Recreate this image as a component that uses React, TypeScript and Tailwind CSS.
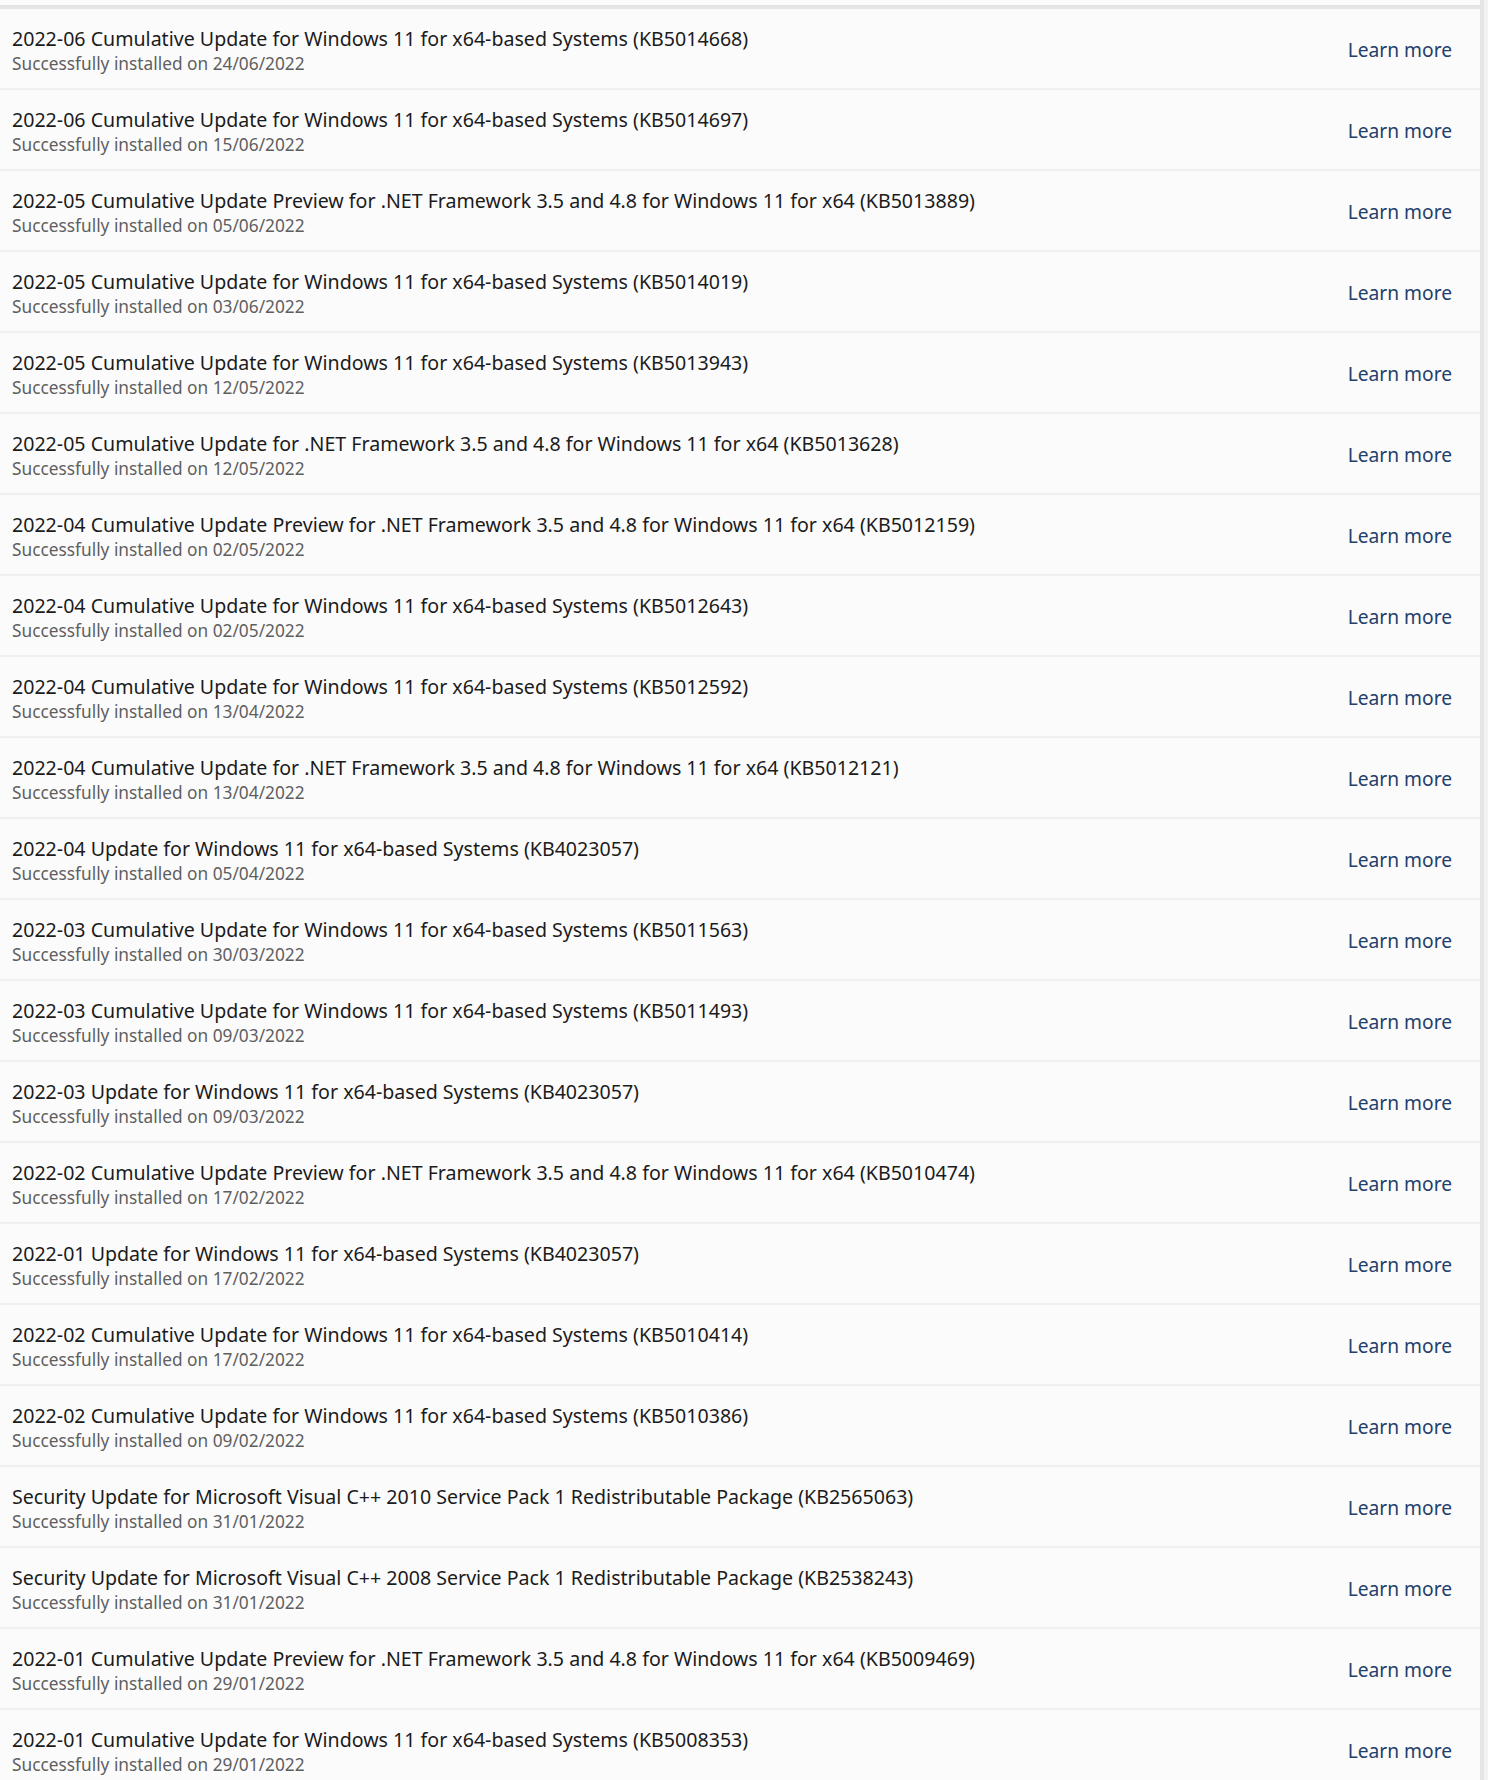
import React from 'react';

interface UpdateItem {
    title: string;
    date: string;
}

const updates: UpdateItem[] = [
    { title: '2022-06 Cumulative Update for Windows 11 for x64-based Systems (KB5014668)', date: '24/06/2022' },
    { title: '2022-06 Cumulative Update for Windows 11 for x64-based Systems (KB5014697)', date: '15/06/2022' },
    { title: '2022-05 Cumulative Update Preview for .NET Framework 3.5 and 4.8 for Windows 11 for x64 (KB5013889)', date: '05/06/2022' },
    { title: '2022-05 Cumulative Update for Windows 11 for x64-based Systems (KB5014019)', date: '03/06/2022' },
    { title: '2022-05 Cumulative Update for Windows 11 for x64-based Systems (KB5013943)', date: '12/05/2022' },
    { title: '2022-05 Cumulative Update for .NET Framework 3.5 and 4.8 for Windows 11 for x64 (KB5013628)', date: '12/05/2022' },
    { title: '2022-04 Cumulative Update Preview for .NET Framework 3.5 and 4.8 for Windows 11 for x64 (KB5012159)', date: '02/05/2022' },
    { title: '2022-04 Cumulative Update for Windows 11 for x64-based Systems (KB5012643)', date: '02/05/2022' },
    { title: '2022-04 Cumulative Update for Windows 11 for x64-based Systems (KB5012592)', date: '13/04/2022' },
    { title: '2022-04 Cumulative Update for .NET Framework 3.5 and 4.8 for Windows 11 for x64 (KB5012121)', date: '13/04/2022' },
    { title: '2022-04 Update for Windows 11 for x64-based Systems (KB4023057)', date: '05/04/2022' },
    { title: '2022-03 Cumulative Update for Windows 11 for x64-based Systems (KB5011563)', date: '30/03/2022' },
    { title: '2022-03 Cumulative Update for Windows 11 for x64-based Systems (KB5011493)', date: '09/03/2022' },
    { title: '2022-03 Update for Windows 11 for x64-based Systems (KB4023057)', date: '09/03/2022' },
    { title: '2022-02 Cumulative Update Preview for .NET Framework 3.5 and 4.8 for Windows 11 for x64 (KB5010474)', date: '17/02/2022' },
    { title: '2022-01 Update for Windows 11 for x64-based Systems (KB4023057)', date: '17/02/2022' },
    { title: '2022-02 Cumulative Update for Windows 11 for x64-based Systems (KB5010414)', date: '17/02/2022' },
    { title: '2022-02 Cumulative Update for Windows 11 for x64-based Systems (KB5010386)', date: '09/02/2022' },
    { title: 'Security Update for Microsoft Visual C++ 2010 Service Pack 1 Redistributable Package (KB2565063)', date: '31/01/2022' },
    { title: 'Security Update for Microsoft Visual C++ 2008 Service Pack 1 Redistributable Package (KB2538243)', date: '31/01/2022' },
    { title: '2022-01 Cumulative Update Preview for .NET Framework 3.5 and 4.8 for Windows 11 for x64 (KB5009469)', date: '29/01/2022' },
    { title: '2022-01 Cumulative Update for Windows 11 for x64-based Systems (KB5008353)', date: '29/01/2022' },
];

const UpdateRow: React.FC<{ item: UpdateItem }> = ({ item }) => (
    <div className="flex items-center h-[81px] shrink-0 border-b-2 border-[#f0f0f0] bg-[#fbfbfb] pl-[12px] pr-[28px] pt-[3px]">
        <div className="flex-1 min-w-0">
            <p className="text-[19.6px] leading-[27px] text-[#1b1b1b] truncate">{item.title}</p>
            <p className="text-[17.3px] leading-[23px] text-[#5f5f5f]">Successfully installed on {item.date}</p>
        </div>
        <a className="text-[19.2px] text-[#23406c] cursor-pointer">Learn more</a>
    </div>
);

export default function App() {
    return (
        <div className="flex h-[1780px] w-full overflow-hidden bg-[#f3f3f3] font-['Noto_Sans',sans-serif]">
            <div className="flex flex-col w-[1480px] shrink-0">
                <div className="h-[5px] shrink-0 bg-[#fcfcfc] mr-[-2px]" />
                <div className="h-[4px] shrink-0 bg-[#e5e5e5] mr-[-4px]" />
                {updates.map((u) => (
                    <UpdateRow key={u.title + u.date} item={u} />
                ))}
            </div>
            <div className="w-[4px] shrink-0 bg-[#e5e5e5]" />
        </div>
    );
}
